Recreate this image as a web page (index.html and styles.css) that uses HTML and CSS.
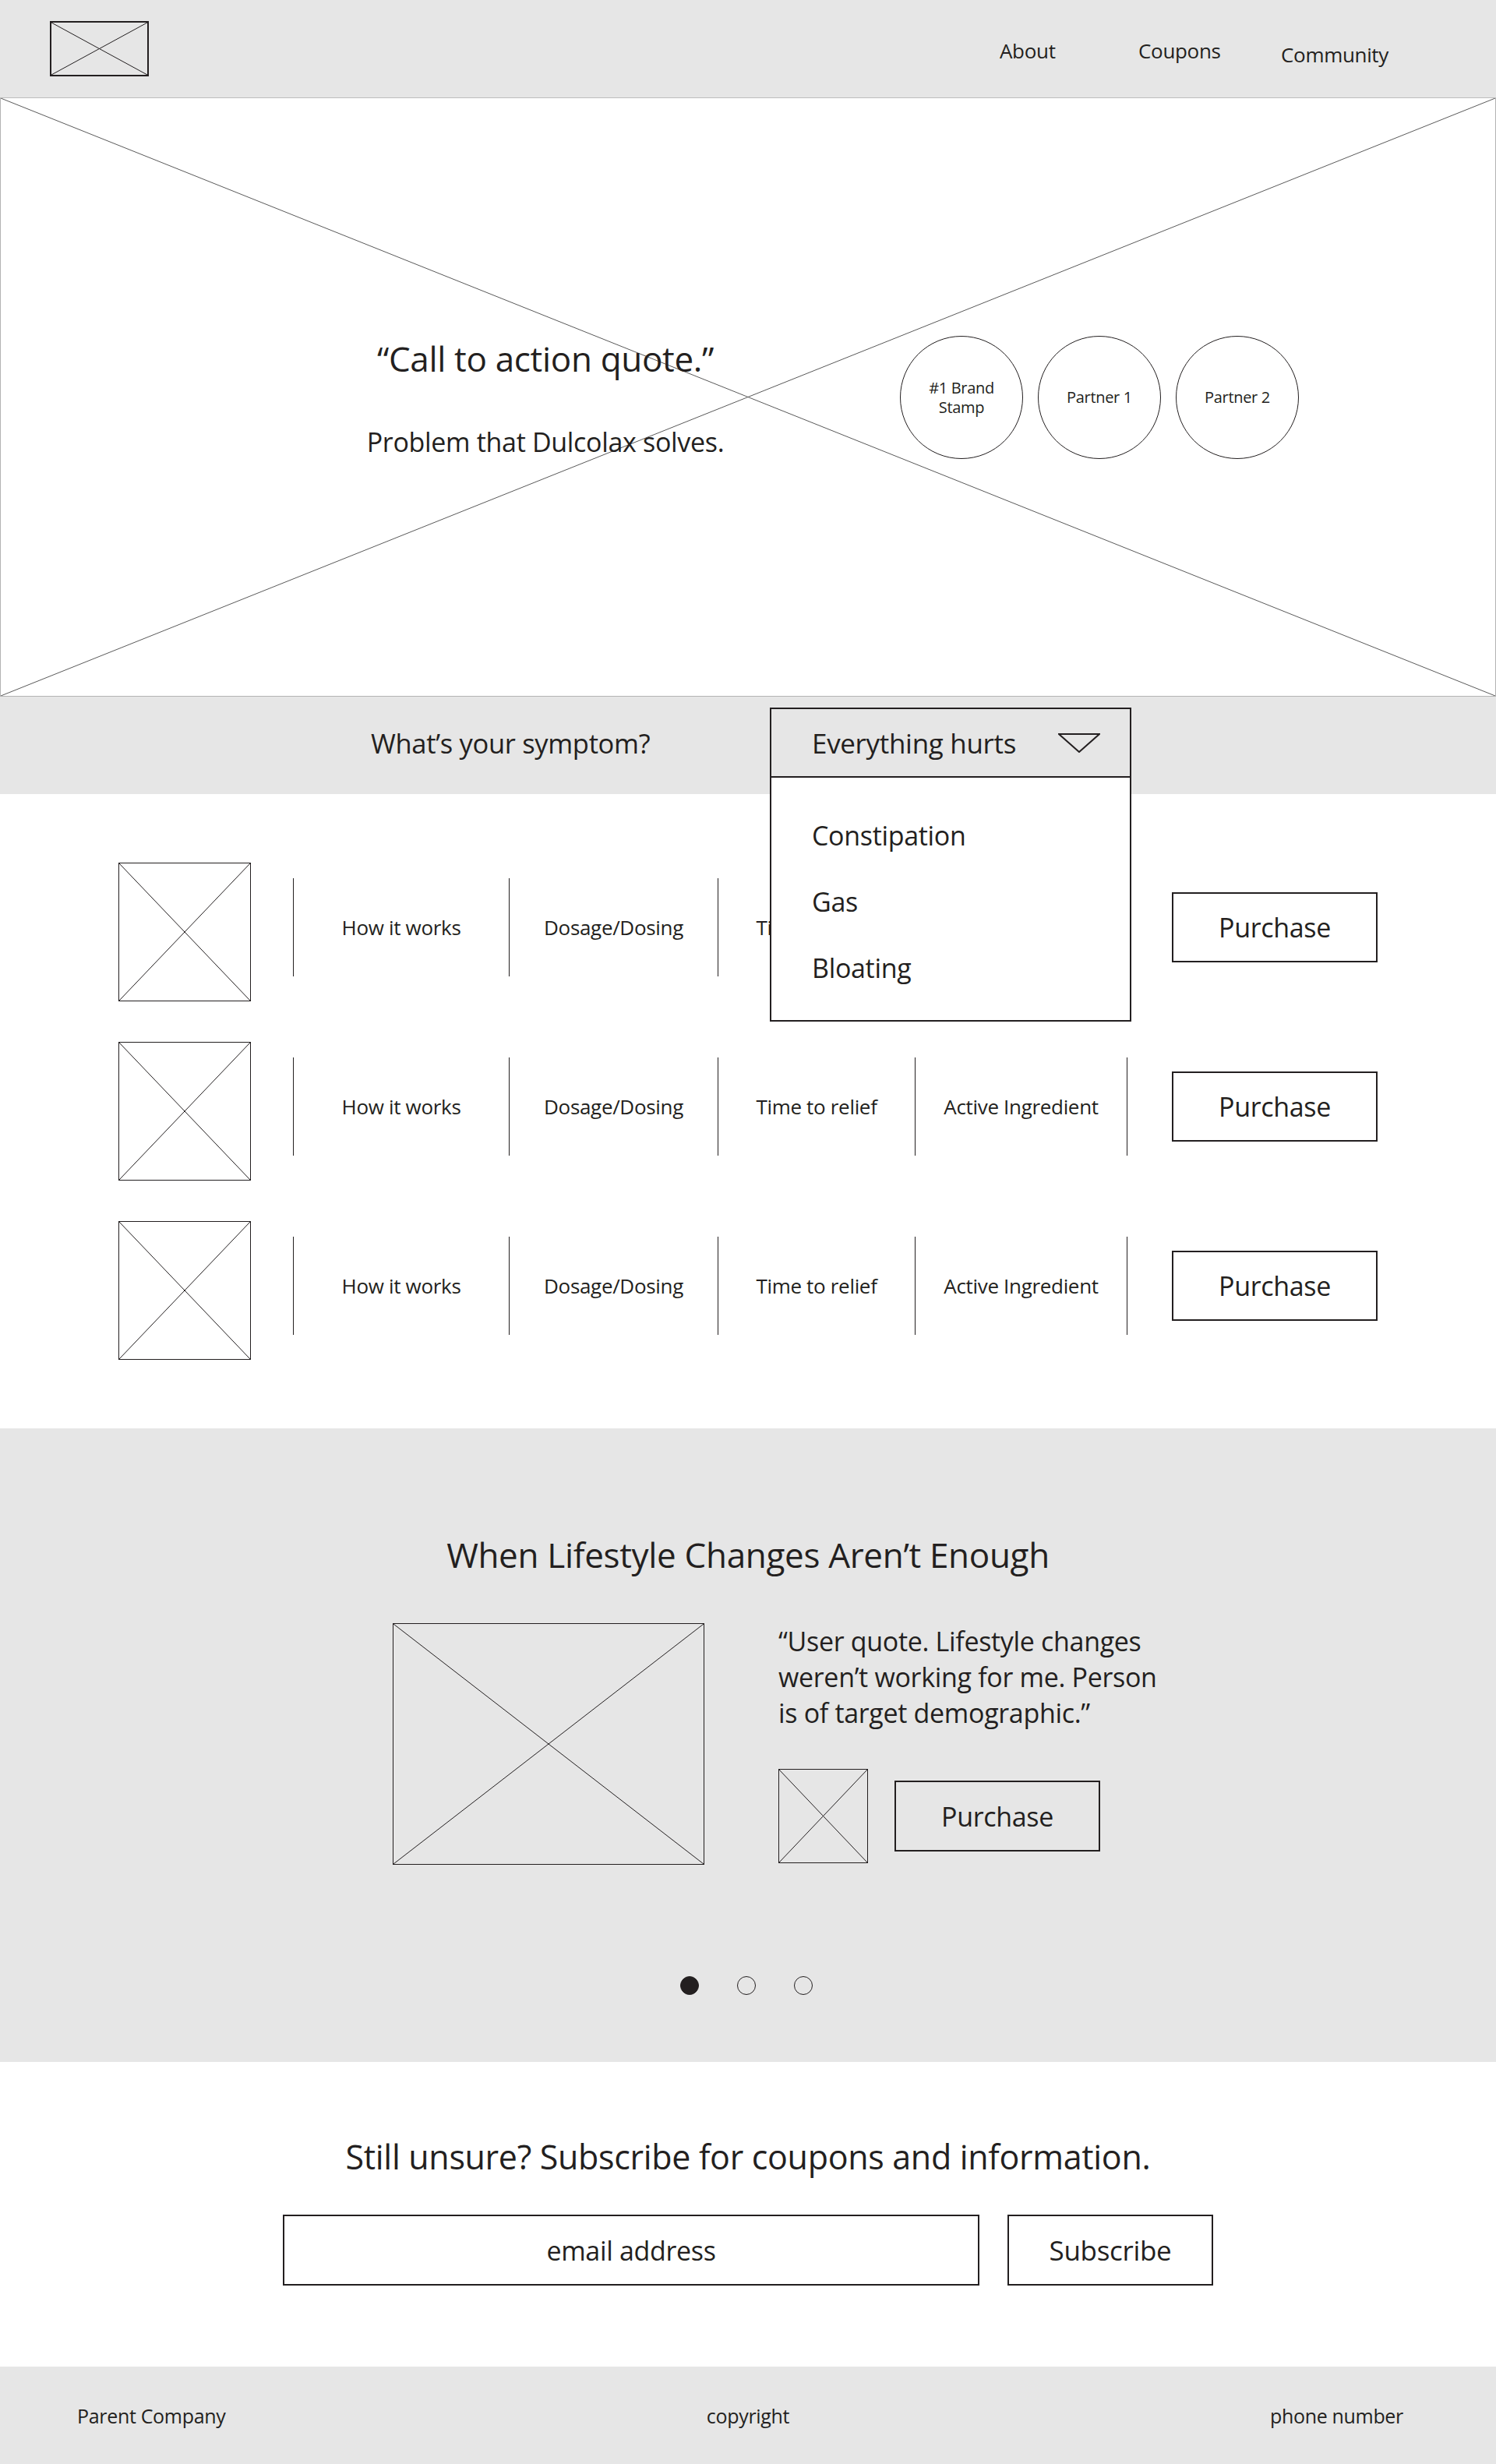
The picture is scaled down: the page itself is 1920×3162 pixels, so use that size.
FILE: index.html
```html
<!DOCTYPE html>
<html>
<head lang="en">
    <meta charset="UTF-8">
    <title>Dulcolax</title>
    <link rel="stylesheet" href="styles.css">
</head>
<body>
    <header class="topbar">
        <div class="logo">
            <svg class="x" viewBox="0 0 100 100" preserveAspectRatio="none"><path d="M0 0L100 100M100 0L0 100"/></svg>
        </div>
        <nav class="nav">
            <a href="#">About</a>
            <a href="#">Coupons</a>
            <a href="#" class="nav-low">Community</a>
        </nav>
    </header>

    <section class="hero">
        <svg class="hero-x" viewBox="0 0 100 100" preserveAspectRatio="none"><path d="M0 0L100 100M100 0L0 100"/></svg>
        <div class="hero-inner">
            <div class="hero-text">
                <p class="hero-quote">“Call to action quote.”</p>
                <p class="hero-sub">Problem that Dulcolax solves.</p>
            </div>
            <div class="badges">
                <div class="badge">#1 Brand<br>Stamp</div>
                <div class="badge">Partner 1</div>
                <div class="badge">Partner 2</div>
            </div>
        </div>
    </section>

    <section class="symptom">
        <div class="symptom-label">What’s your symptom?</div>
        <div class="select">
            <div class="select-head">
                <span>Everything hurts</span>
                <svg class="caret" viewBox="0 0 54 25"><polygon points="1,1 53,1 27,24"/></svg>
            </div>
            <ul class="select-list">
                <li>Constipation</li>
                <li>Gas</li>
                <li>Bloating</li>
            </ul>
        </div>
    </section>

    <section class="products">
        <div class="product">
            <div class="thumb ph"><svg class="x" viewBox="0 0 100 100" preserveAspectRatio="none"><path d="M0 0L100 100M100 0L0 100"/></svg></div>
            <div class="specs">
                <div class="spec">How it works</div>
                <div class="spec">Dosage/Dosing</div>
                <div class="spec">Time to relief</div>
                <div class="spec">Active Ingredient</div>
            </div>
            <button class="btn">Purchase</button>
        </div>
        <div class="product">
            <div class="thumb ph"><svg class="x" viewBox="0 0 100 100" preserveAspectRatio="none"><path d="M0 0L100 100M100 0L0 100"/></svg></div>
            <div class="specs">
                <div class="spec">How it works</div>
                <div class="spec">Dosage/Dosing</div>
                <div class="spec">Time to relief</div>
                <div class="spec">Active Ingredient</div>
            </div>
            <button class="btn">Purchase</button>
        </div>
        <div class="product">
            <div class="thumb ph"><svg class="x" viewBox="0 0 100 100" preserveAspectRatio="none"><path d="M0 0L100 100M100 0L0 100"/></svg></div>
            <div class="specs">
                <div class="spec">How it works</div>
                <div class="spec">Dosage/Dosing</div>
                <div class="spec">Time to relief</div>
                <div class="spec">Active Ingredient</div>
            </div>
            <button class="btn">Purchase</button>
        </div>
    </section>

    <section class="lifestyle">
        <h2 class="lifestyle-title">When Lifestyle Changes Aren’t Enough</h2>
        <div class="story">
            <div class="story-img ph"><svg class="x" viewBox="0 0 100 100" preserveAspectRatio="none"><path d="M0 0L100 100M100 0L0 100"/></svg></div>
            <div class="story-body">
                <p class="story-quote">“User quote. Lifestyle changes<br>weren’t working for me. Person<br>is of target demographic.”</p>
                <div class="story-buy">
                    <div class="story-thumb ph"><svg class="x" viewBox="0 0 100 100" preserveAspectRatio="none"><path d="M0 0L100 100M100 0L0 100"/></svg></div>
                    <button class="btn">Purchase</button>
                </div>
            </div>
        </div>
        <div class="dots">
            <span class="dot on"></span>
            <span class="dot"></span>
            <span class="dot"></span>
        </div>
    </section>

    <section class="subscribe">
        <h2 class="subscribe-title">Still unsure? Subscribe for coupons and information.</h2>
        <form class="signup">
            <input class="email" type="text" placeholder="email address">
            <button class="btn" type="button">Subscribe</button>
        </form>
    </section>

    <footer class="footer">
        <span>Parent Company</span>
        <span>copyright</span>
        <span class="footer-end">phone number</span>
    </footer>
</body>
</html>
```

FILE: styles.css
```css
*{
    margin: 0;
    padding: 0;
    box-sizing: border-box;
}
body{
    font-family: "Open Sans", "Noto Sans", sans-serif;
    color: #231f20;
    letter-spacing: -0.02em;
    background: #ffffff;
}
ul{
    list-style: none;
}
h2{
    font-weight: 400;
}
.ph{
    border: 1px solid #231f20;
}
.x{
    display: block;
    width: 100%;
    height: 100%;
}
.x path{
    fill: none;
    stroke: #231f20;
    stroke-width: 1;
    vector-effect: non-scaling-stroke;
}

/* header */
.topbar{
    height: 126px;
    background: #e6e6e6;
    border-bottom: 1px solid #bdbdbd;
    display: flex;
    align-items: center;
    justify-content: space-between;
    padding: 0 96px 0 64px;
}
.logo{
    width: 127px;
    height: 71px;
    border: 2px solid #231f20;
}
.nav{
    display: flex;
    align-items: flex-start;
    margin-top: 10px;
}
.nav a{
    width: 180px;
    font-size: 26px;
    line-height: 36px;
    color: #231f20;
    text-decoration: none;
}
.nav a:first-child{
    width: 178px;
}
.nav a:nth-child(2){
    width: 183px;
}
.nav .nav-low{
    margin-top: 5px;
}

/* hero */
.hero{
    height: 768px;
    border: 1px solid #b3b3b3;
    border-top: 0;
    display: grid;
}
.hero > *{
    grid-area: 1 / 1;
}
.hero-x{
    display: block;
    width: 100%;
    height: 100%;
}
.hero-x path{
    fill: none;
    stroke: #5a5a5a;
    stroke-width: 1;
    vector-effect: non-scaling-stroke;
}
.hero-inner{
    display: flex;
    align-items: center;
}
.hero-text{
    width: 600px;
    margin-left: 399px;
    text-align: center;
}
.hero-quote{
    font-size: 44px;
    line-height: 60px;
}
.hero-sub{
    font-size: 34px;
    line-height: 44px;
    margin-top: 55px;
}
.badges{
    display: flex;
    gap: 19px;
    margin-left: 155px;
}
.badge{
    width: 158px;
    height: 158px;
    border: 1px solid #231f20;
    border-radius: 50%;
    background: #ffffff;
    display: flex;
    align-items: center;
    justify-content: center;
    text-align: center;
    font-size: 20px;
    line-height: 25px;
}

/* symptom picker */
.symptom{
    height: 125px;
    background: #e6e6e6;
    display: flex;
    align-items: flex-start;
    padding: 14px 0 0 476px;
}
.symptom-label{
    width: 512px;
    height: 90px;
    display: flex;
    align-items: center;
    font-size: 34.5px;
}
.select{
    position: relative;
    z-index: 2;
    width: 464px;
}
.select-head{
    height: 90px;
    border: 2px solid #231f20;
    display: flex;
    align-items: center;
    justify-content: space-between;
    padding: 0 38px 0 52px;
    font-size: 35px;
}
.caret{
    width: 54px;
    height: 25px;
}
.caret polygon{
    fill: none;
    stroke: #231f20;
    stroke-width: 2;
}
.select-list{
    position: absolute;
    top: 100%;
    left: 0;
    right: 0;
    height: 313px;
    background: #ffffff;
    border: 2px solid #231f20;
    border-top: 0;
    padding-top: 32px;
}
.select-list li{
    font-size: 34px;
    line-height: 85px;
    padding-left: 52px;
}

/* products */
.products{
    padding: 62px 0;
}
.product{
    height: 230px;
    display: flex;
    align-items: center;
    padding-left: 152px;
}
.thumb{
    width: 170px;
    height: 178px;
}
.specs{
    display: flex;
    margin: 0 0 12px 54px;
}
.spec{
    height: 126px;
    border-left: 1px solid #231f20;
    display: flex;
    align-items: center;
    justify-content: center;
    font-size: 26px;
}
.spec:nth-child(1){
    width: 277px;
}
.spec:nth-child(2){
    width: 268px;
}
.spec:nth-child(3){
    width: 253px;
}
.spec:nth-child(4){
    width: 273px;
    border-right: 1px solid #231f20;
}
.btn{
    width: 264px;
    height: 90px;
    border: 2px solid #231f20;
    background: none;
    display: flex;
    align-items: center;
    justify-content: center;
    font-family: inherit;
    font-size: 34px;
    letter-spacing: inherit;
    color: #231f20;
    cursor: pointer;
}
.product .btn{
    margin: 0 0 12px 57px;
}

/* lifestyle */
.lifestyle{
    background: #e6e6e6;
    padding: 132px 0 86px;
}
.lifestyle-title{
    font-size: 44px;
    line-height: 60px;
    text-align: center;
}
.story{
    display: flex;
    margin: 58px 0 0 504px;
}
.story-img{
    width: 400px;
    height: 310px;
}
.story-body{
    margin-left: 95px;
}
.story-quote{
    font-size: 34px;
    line-height: 46px;
    white-space: nowrap;
}
.story-buy{
    display: flex;
    align-items: center;
    gap: 34px;
    margin-top: 49px;
}
.story-thumb{
    width: 115px;
    height: 121px;
}
.story-buy .btn{
    height: 91px;
}
.dots{
    display: flex;
    justify-content: center;
    gap: 49px;
    margin-top: 143px;
    padding-right: 4px;
}
.dot{
    width: 24px;
    height: 24px;
    border-radius: 50%;
    border: 1.5px solid #231f20;
}
.dot.on{
    background: #231f20;
}

/* subscribe */
.subscribe{
    padding: 94px 0 104px;
    text-align: center;
}
.subscribe-title{
    font-size: 43px;
    line-height: 56px;
}
.signup{
    display: flex;
    justify-content: center;
    gap: 36px;
    margin-top: 46px;
}
.email{
    width: 894px;
    height: 91px;
    border: 2px solid #231f20;
    background: #ffffff;
    font-family: inherit;
    font-size: 34px;
    letter-spacing: inherit;
    text-align: center;
    color: #231f20;
    outline: none;
}
.email::placeholder{
    color: #231f20;
    opacity: 1;
}
.signup .btn{
    height: 91px;
    font-size: 35px;
}

/* footer */
.footer{
    height: 125px;
    background: #e6e6e6;
    display: grid;
    grid-template-columns: 1fr auto 1fr;
    align-items: center;
    padding: 0 99px;
    font-size: 25px;
}
.footer-end{
    justify-self: end;
    margin-right: 20px;
}
```
